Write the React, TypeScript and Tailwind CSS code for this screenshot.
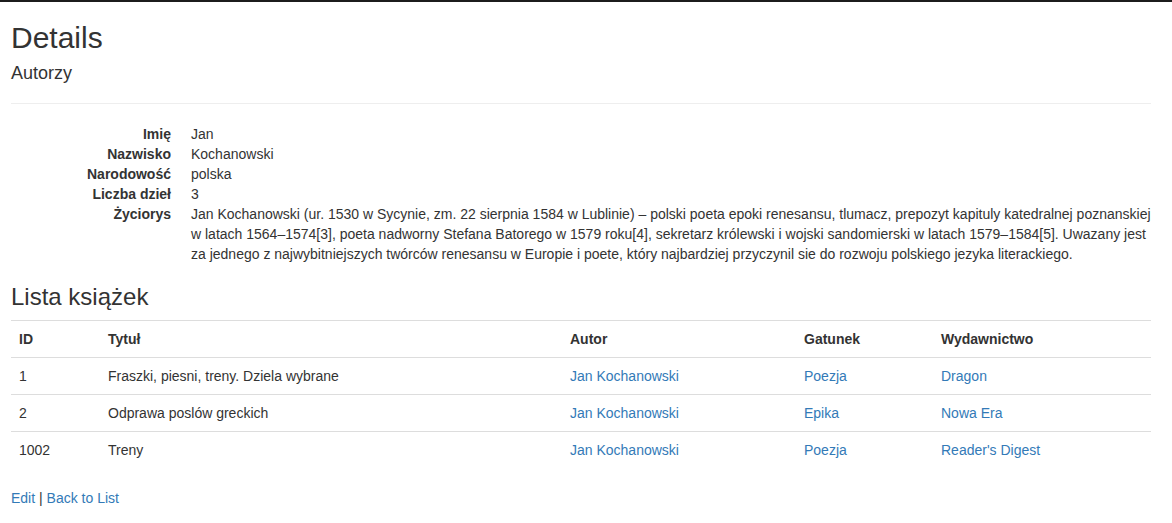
const details: [string, string][] = [
  ["Imię", "Jan"],
  ["Nazwisko", "Kochanowski"],
  ["Narodowość", "polska"],
  ["Liczba dzieł", "3"],
  [
    "Życiorys",
    "Jan Kochanowski (ur. 1530 w Sycynie, zm. 22 sierpnia 1584 w Lublinie) – polski poeta epoki renesansu, tlumacz, prepozyt kapituly katedralnej poznanskiej w latach 1564–1574[3], poeta nadworny Stefana Batorego w 1579 roku[4], sekretarz królewski i wojski sandomierski w latach 1579–1584[5]. Uwazany jest za jednego z najwybitniejszych twórców renesansu w Europie i poete, który najbardziej przyczynil sie do rozwoju polskiego jezyka literackiego.",
  ],
];

const books = [
  { id: "1", title: "Fraszki, piesni, treny. Dziela wybrane", author: "Jan Kochanowski", genre: "Poezja", publisher: "Dragon" },
  { id: "2", title: "Odprawa poslów greckich", author: "Jan Kochanowski", genre: "Epika", publisher: "Nowa Era" },
  { id: "1002", title: "Treny", author: "Jan Kochanowski", genre: "Poezja", publisher: "Reader's Digest" },
];

const cell = "px-2 py-2 border-t border-[#ddd] text-left align-top";

export default function App() {
  return (
    <div className="min-h-[523px] bg-white font-['Liberation_Sans',Arial,sans-serif] text-[14px] leading-[20px] text-[#333]">
      <div className="h-[2px] bg-[#1c1c1c]" />
      <div className="px-[11px] pt-[19px] w-[1162px]">
        <h2 className="text-[30px] leading-[33px] mb-[20px]">Details</h2>
        <h4 className="text-[18px] leading-[19.8px] mt-[-10px]">Autorzy</h4>
        <hr className="mt-[19px] mb-[20px] border-0 border-t border-[#eee]" />

        <dl className="mb-[20px]">
          {details.map(([label, value]) => (
            <div key={label} className="flex">
              <dt className="w-[160px] shrink-0 text-right font-bold">{label}</dt>
              <dd className="ml-[20px]">{value}</dd>
            </div>
          ))}
        </dl>

        <h3 className="text-[24px] leading-[26.4px] mb-[10px]">Lista książek</h3>

        <table className="w-full border-collapse mb-[20px]">
          <colgroup>
            <col className="w-[89px]" />
            <col className="w-[462px]" />
            <col className="w-[234px]" />
            <col className="w-[137px]" />
            <col />
          </colgroup>
          <tbody>
            <tr>
              <th className={`${cell} font-bold`}>ID</th>
              <th className={`${cell} font-bold`}>Tytuł</th>
              <th className={`${cell} font-bold`}>Autor</th>
              <th className={`${cell} font-bold`}>Gatunek</th>
              <th className={`${cell} font-bold`}>Wydawnictwo</th>
            </tr>
            {books.map((b) => (
              <tr key={b.id}>
                <td className={cell}>{b.id}</td>
                <td className={cell}>{b.title}</td>
                <td className={cell}>
                  <a href="#" className="text-[#337ab7]">{b.author}</a>
                </td>
                <td className={cell}>
                  <a href="#" className="text-[#337ab7]">{b.genre}</a>
                </td>
                <td className={cell}>
                  <a href="#" className="text-[#337ab7]">{b.publisher}</a>
                </td>
              </tr>
            ))}
          </tbody>
        </table>

        <p>
          <a href="#" className="text-[#337ab7]">Edit</a> |{" "}
          <a href="#" className="text-[#337ab7]">Back to List</a>
        </p>
      </div>
    </div>
  );
}
